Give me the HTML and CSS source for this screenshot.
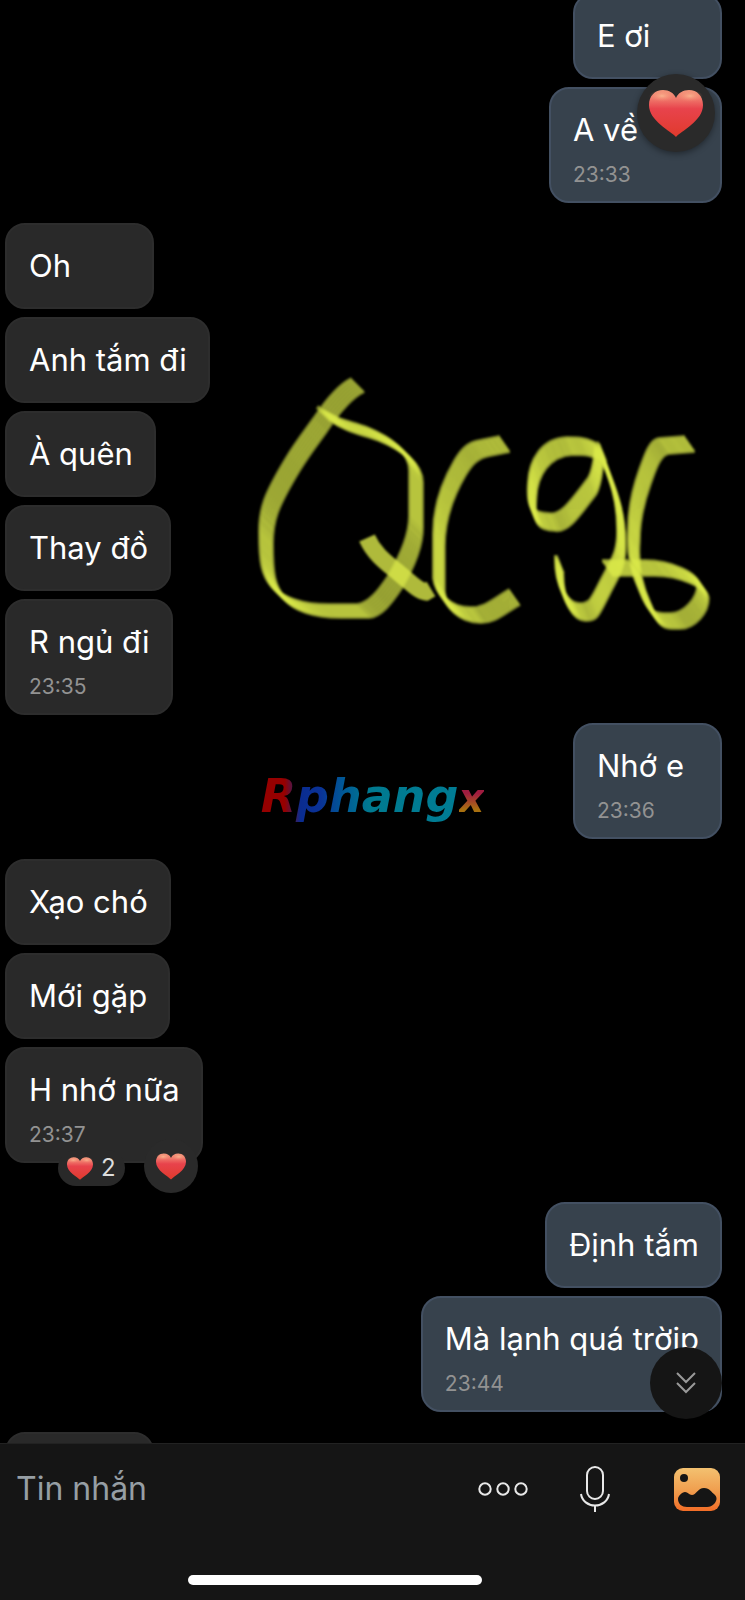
FILE: index.html
```
<!DOCTYPE html>
<html lang="vi">
<head>
  <meta charset="UTF-8">
  <meta name="viewport" content="width=device-width, initial-scale=1.0">
  <title>Tin nhắn</title>
  <link rel="stylesheet" href="styles.css">
</head>
<body>

  <!-- Shared shapes -->
  <svg class="defs" width="0" height="0" aria-hidden="true">
    <defs>
      <linearGradient id="heart-fill" x1="0" y1="0" x2="0" y2="1">
        <stop offset="0" stop-color="#f2977c"/>
        <stop offset="0.18" stop-color="#f07a6c"/>
        <stop offset="0.4" stop-color="#e8434c"/>
        <stop offset="1" stop-color="#e03a2c"/>
      </linearGradient>
      <radialGradient id="heart-shine">
        <stop offset="0" stop-color="#ffd0a0" stop-opacity="0.6"/>
        <stop offset="1" stop-color="#f58a70" stop-opacity="0"/>
      </radialGradient>
      <linearGradient id="photo-fill" x1="0" y1="0" x2="0" y2="1">
        <stop offset="0" stop-color="#f3c170"/>
        <stop offset="0.5" stop-color="#f0a050"/>
        <stop offset="1" stop-color="#f26d27"/>
      </linearGradient>
      <symbol id="heart" viewBox="0 0 54 47">
        <path fill="url(#heart-fill)" d="M27 47C22 41 0 31 0 15C0 6 6 0 14 0C20 0 25 3 27 8C29 3 34 0 40 0C48 0 54 6 54 15C54 31 32 41 27 47Z"/>
        <ellipse cx="13" cy="6" rx="13" ry="6" fill="url(#heart-shine)"/>
        <ellipse cx="41" cy="6" rx="13" ry="6" fill="url(#heart-shine)"/>
      </symbol>
    </defs>
  </svg>

  <main class="chat">
    <div class="group sent">
      <div class="bubble">E ơi</div>
      <div class="bubble timed liked">A về<time>23:33</time>
        <button class="reaction large" aria-label="Thả tim"><svg><use href="#heart"/></svg></button>
      </div>
    </div>

    <div class="group">
      <div class="bubble">Oh</div>
      <div class="bubble">Anh tắm đi</div>
      <div class="bubble">À quên</div>
      <div class="bubble">Thay đồ</div>
      <div class="bubble timed">R ngủ đi<time>23:35</time></div>
    </div>

    <div class="group sent close">
      <div class="bubble timed">Nhớ e<time>23:36</time></div>
    </div>

    <div class="group">
      <div class="bubble">Xạo chó</div>
      <div class="bubble">Mới gặp</div>
      <div class="bubble timed">H nhớ nữa<time>23:37</time>
        <span class="count"><svg><use href="#heart"/></svg>2</span>
        <button class="reaction" aria-label="Thả tim"><svg><use href="#heart"/></svg></button>
      </div>
    </div>

    <div class="group sent reacted">
      <div class="bubble">Định tắm</div>
      <div class="bubble timed">Mà lạnh quá trờip<time>23:44</time></div>
    </div>

    <div class="group">
      <div class="bubble"></div>
    </div>

    <!-- Highlighter scribble: each line is swept along the edge of a flat nib -->
    <svg class="scribble" viewBox="250 370 470 270" role="img" aria-label="QC96">
      <defs>
        <path id="ink-a" d="M358 385C345 391 330 410 320 425C310 439 302 449 293 464C270 502 266 515 266 538C266 568 268 580 278 592C290 606 312 611 335 611L363 611C375 610 385 597 395 582C408 560 416 540 416 522L416 478C417 458 395 443 373 434C355 427 345 428 323 413"/>
        <path id="ink-b" d="M505 444L485 448C472 450 466 458 460 468C446 492 439 515 439 540L439 585C441 600 455 615 475 615C490 616 500 605 515 597M690 444L664 446C655 447 650 463 645 477C636 502 634 520 634 535C632 560 638 582 645 597C655 622 660 621 675 621C690 621 703 605 703 592C703 580 675 568 650 568L607 568"/>
        <path id="ink-c" d="M603 454C590 446 580 446 570 446C545 447 533 468 532 490C530 515 535 522 552 522C565 524 575 508 592 486C598 475 597 465 600 450C605 470 621 495 621 535C622 560 615 567 605 587C595 606 594 612 583 612C572 613 558 595 559 563"/>
      </defs>
      <g transform="translate(-6 -6)">
        <use href="#ink-a"/>
        <use href="#ink-a" x="2" y="2"/>
        <use href="#ink-a" x="4" y="4"/>
        <use href="#ink-a" x="6" y="6"/>
        <use href="#ink-a" x="8" y="8"/>
        <use href="#ink-a" x="10" y="10"/>
        <use href="#ink-a" x="12" y="12"/>
      </g>
      <g transform="translate(-5 -7)">
        <use href="#ink-b"/>
        <use href="#ink-b" x="1.4" y="2"/>
        <use href="#ink-b" x="2.8" y="4"/>
        <use href="#ink-b" x="4.2" y="6"/>
        <use href="#ink-b" x="5.6" y="8"/>
        <use href="#ink-b" x="7" y="10"/>
        <use href="#ink-b" x="8.4" y="12"/>
        <use href="#ink-b" x="9.8" y="14"/>
      </g>
      <g transform="translate(-3 -8)">
        <use href="#ink-c"/>
        <use href="#ink-c" x="0.8" y="2"/>
        <use href="#ink-c" x="1.6" y="4"/>
        <use href="#ink-c" x="2.4" y="6"/>
        <use href="#ink-c" x="3.2" y="8"/>
        <use href="#ink-c" x="4" y="10"/>
        <use href="#ink-c" x="4.8" y="12"/>
        <use href="#ink-c" x="5.6" y="14"/>
        <use href="#ink-c" x="6.4" y="16"/>
      </g>
      <path class="tail" d="M367 538C375 556 390 565 400 574C410 582 418 591 426 592L431 589"/>
    </svg>

    <div class="watermark"><span class="mark-main">Rphang</span><span class="mark-end">x</span></div>

    <button class="jump" aria-label="Xuống cuối">
      <svg width="20" height="22" viewBox="0 0 20 22"><path d="M1 1L10 10L19 1M1 11L10 20L19 11"/></svg>
    </button>
  </main>

  <footer class="composer">
    <form class="bar">
      <input class="message" type="text" placeholder="Tin nhắn" aria-label="Tin nhắn">
      <button class="tool" type="button" aria-label="Thêm">
        <svg width="52" height="16" viewBox="0 0 52 16"><circle cx="8" cy="8" r="5.700"/><circle cx="26" cy="8" r="5.700"/><circle cx="44" cy="8" r="5.700"/></svg>
      </button>
      <button class="tool" type="button" aria-label="Ghi âm">
        <svg width="30" height="46" viewBox="0 0 30 46"><rect x="7" y="1" width="16" height="32" rx="8"/><path d="M1 28C2 35 8 39.500 15 39.500C22 39.500 28 35 29 28M15 40V46"/></svg>
      </button>
      <button class="tool photo" type="button" aria-label="Gửi ảnh">
        <svg width="46" height="43" viewBox="0 0 46 43">
          <rect width="46" height="43" rx="9" fill="url(#photo-fill)"/>
          <circle cx="10" cy="10" r="4"/>
          <path d="M4 31C4 28 8 24 11 24C14 24 15 27 18 27C22 27 24 20 30 20C36 20 37 24 41 27C44 30 42 34 40 36C38 38 36 39 33 39H13C8 39 4 36 4 31Z"/>
        </svg>
      </button>
    </form>
    <div class="home"></div>
  </footer>

</body>
</html>
```
FILE: styles.css
```
* {
  box-sizing: border-box;
}

body {
  display: flex;
  flex-direction: column;
  height: 100vh;
  margin: 0;
  background-color: #000;
  color: #fff;
  font-family: Inter, "Noto Sans", sans-serif;
}

button {
  display: flex;
  align-items: center;
  justify-content: center;
  padding: 0;
  border: none;
  background: none;
}

.defs {
  position: absolute;
}

/* Conversation */
.chat {
  position: relative;
  flex: 1;
  min-height: 0;
  overflow: hidden;
  padding: 0 23px 0 5px;
}

.group {
  display: flex;
  flex-direction: column;
  align-items: flex-start;
  gap: 8px;
  margin-top: 20px;
}

.group:first-child {
  margin-top: -7px;
}

.group.close {
  margin-top: 8px;
}

.group.reacted {
  margin-top: 39px;
}

.sent {
  align-items: flex-end;
}

.bubble {
  position: relative;
  min-width: 149px;
  min-height: 86px;
  padding: 21px 21px 21px 22px;
  border: 2px solid #2d2d2d;
  border-radius: 20px;
  background-color: #292929;
  font-size: 31px;
  line-height: 40px;
}

.sent .bubble {
  border-color: #435062;
  background-color: #37424d;
}

.bubble.timed {
  padding-bottom: 11px;
}

.bubble.liked {
  min-width: 173px;
}

time {
  display: block;
  margin-top: 10px;
  color: #929292;
  font-size: 21px;
  line-height: 30px;
}

/* Reactions */
.reaction {
  position: absolute;
  right: 3px;
  bottom: -32px;
  width: 54px;
  height: 54px;
  border-radius: 50%;
  background-color: #2a2a2a;
}

.reaction svg {
  width: 30px;
  height: 27px;
}

.reaction.large {
  top: -15px;
  right: 5px;
  width: 78px;
  height: 78px;
  box-shadow: 0 2px 6px rgba(0, 0, 0, 0.4);
}

.reaction.large svg {
  width: 54px;
  height: 47px;
}

.count {
  position: absolute;
  left: 51px;
  bottom: -25px;
  display: flex;
  align-items: center;
  gap: 8px;
  height: 36px;
  padding: 0 9px;
  border-radius: 18px;
  background-color: #292929;
  color: #ddd;
  font-size: 24px;
  line-height: 36px;
}

.count svg {
  width: 26px;
  height: 23px;
}

/* Drawn over the conversation */
.scribble {
  position: absolute;
  top: 370px;
  left: 250px;
  width: 470px;
  height: 270px;
  fill: none;
  stroke: #dbe94a;
  stroke-width: 4px;
  filter: blur(1px);
  pointer-events: none;
}

.scribble use {
  opacity: 0.6;
}

.scribble .tail {
  stroke-width: 17px;
  opacity: 0.8;
}

.watermark {
  position: absolute;
  top: 769px;
  left: 0;
  right: 0;
  font: italic bold 46px/54px "DejaVu Sans", sans-serif;
  text-align: center;
}

.watermark span {
  background-clip: text;
  color: transparent;
}

.watermark .mark-main {
  background-image: linear-gradient(90deg, #960000 12%, #0a2c90 20%, #0a3296 30%, #005a96 42%, #007a90 55%, #007c94);
}

.watermark .mark-end {
  background-image: linear-gradient(180deg, #a01c40 40%, #a87010 75%);
  font-size: 40px;
}

.jump {
  position: absolute;
  right: 23px;
  bottom: 24px;
  width: 72px;
  height: 72px;
  border-radius: 50%;
  background-color: #151515;
}

.jump svg {
  fill: none;
  stroke: #999;
  stroke-width: 2px;
}

/* Composer */
.composer {
  padding-bottom: 15px;
  border-top: 1px solid #222;
  background-color: #151515;
}

.bar {
  display: flex;
  align-items: center;
  gap: 40px;
  height: 90px;
  padding: 0 12px 0 16px;
}

.message {
  flex: 1;
  min-width: 0;
  padding: 0;
  border: none;
  outline: none;
  background: none;
  color: #fff;
  font-family: inherit;
  font-size: 32px;
  line-height: 40px;
}

.message::placeholder {
  color: #969ea4;
  opacity: 1;
}

.tool {
  width: 52px;
  height: 52px;
}

.tool svg {
  fill: none;
  stroke: #e8e8e8;
  stroke-width: 2px;
}

.tool.photo {
  width: 72px;
}

.tool.photo svg {
  fill: #151515;
  stroke: none;
}

.home {
  width: 294px;
  height: 10px;
  margin: 41px 0 0 188px;
  border-radius: 5px;
  background-color: #fff;
}
```
